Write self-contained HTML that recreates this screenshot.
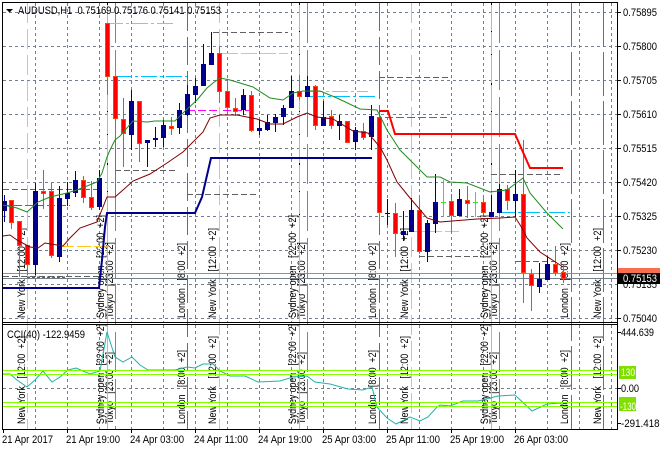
<!DOCTYPE html>
<html><head><meta charset="utf-8"><title>AUDUSD,H1</title>
<style>
html,body{margin:0;padding:0;background:#fff;width:660px;height:450px;overflow:hidden}
svg{display:block}
text{font-family:"Liberation Sans",sans-serif;font-size:11px;fill:#000;white-space:pre}
.v text{font-size:11px}
</style></head><body>
<svg width="660" height="450" viewBox="0 0 660 450" xmlns="http://www.w3.org/2000/svg" xml:space="preserve">
<rect width="660" height="450" fill="#fff"/>
<!-- grid -->
<g stroke="#708090" fill="none" stroke-dasharray="3 3" shape-rendering="crispEdges">
<path d="M3 12.5H617M3 46.5H617M3 80.5H617M3 114.5H617M3 148.5H617M3 182.5H617M3 216.5H617M3 250.5H617M3 284.5H617M3 318.5H617M3 388.5H617"/>
<path d="M35.5 3V322M67.5 3V322M99.5 3V322M131.5 3V322M163.5 3V322M195.5 3V322M227.5 3V322M259.5 3V322M291.5 3V322M323.5 3V322M355.5 3V322M387.5 3V322M419.5 3V322M451.5 3V322M483.5 3V322M515.5 3V322M547.5 3V322M579.5 3V322M611.5 3V322"/>
<path d="M35.5 325V429M67.5 325V429M99.5 325V429M131.5 325V429M163.5 325V429M195.5 325V429M227.5 325V429M259.5 325V429M291.5 325V429M323.5 325V429M355.5 325V429M387.5 325V429M419.5 325V429M451.5 325V429M483.5 325V429M515.5 325V429M547.5 325V429M579.5 325V429M611.5 325V429"/>
</g>
<!-- vertical session labels -->
<g class="v">
<text transform="translate(25,318) rotate(-90)" textLength="90" lengthAdjust="spacingAndGlyphs">New York   [12:00  +2]</text>
<text transform="translate(104,318) rotate(-90)" textLength="103" lengthAdjust="spacingAndGlyphs">Sydney open   [22:00  +2]</text>
<text transform="translate(113,318) rotate(-90)" textLength="76" lengthAdjust="spacingAndGlyphs">Tokyo   [23:00  +2]</text>
<text transform="translate(185,318) rotate(-90)" textLength="75" lengthAdjust="spacingAndGlyphs">London   [8:00  +2]</text>
<text transform="translate(216,318) rotate(-90)" textLength="90" lengthAdjust="spacingAndGlyphs">New York   [12:00  +2]</text>
<text transform="translate(296,318) rotate(-90)" textLength="103" lengthAdjust="spacingAndGlyphs">Sydney open   [22:00  +2]</text>
<text transform="translate(305,318) rotate(-90)" textLength="76" lengthAdjust="spacingAndGlyphs">Tokyo   [23:00  +2]</text>
<text transform="translate(376,318) rotate(-90)" textLength="75" lengthAdjust="spacingAndGlyphs">London   [8:00  +2]</text>
<text transform="translate(408,318) rotate(-90)" textLength="90" lengthAdjust="spacingAndGlyphs">New York   [12:00  +2]</text>
<text transform="translate(488,318) rotate(-90)" textLength="103" lengthAdjust="spacingAndGlyphs">Sydney open   [22:00  +2]</text>
<text transform="translate(497,318) rotate(-90)" textLength="76" lengthAdjust="spacingAndGlyphs">Tokyo   [23:00  +2]</text>
<text transform="translate(568,318) rotate(-90)" textLength="75" lengthAdjust="spacingAndGlyphs">London   [8:00  +2]</text>
<text transform="translate(601,318) rotate(-90)" textLength="90" lengthAdjust="spacingAndGlyphs">New York   [12:00  +2]</text>

<text transform="translate(25,424) rotate(-90)" textLength="88" lengthAdjust="spacingAndGlyphs">New York   [12:00  +2]</text>
<text transform="translate(104,424) rotate(-90)" textLength="100" lengthAdjust="spacingAndGlyphs">Sydney open   [22:00  +2]</text>
<text transform="translate(113,424) rotate(-90)" textLength="72" lengthAdjust="spacingAndGlyphs">Tokyo   [23:00  +2]</text>
<text transform="translate(185,424) rotate(-90)" textLength="74" lengthAdjust="spacingAndGlyphs">London   [8:00  +2]</text>
<text transform="translate(216,424) rotate(-90)" textLength="88" lengthAdjust="spacingAndGlyphs">New York   [12:00  +2]</text>
<text transform="translate(296,424) rotate(-90)" textLength="100" lengthAdjust="spacingAndGlyphs">Sydney open   [22:00  +2]</text>
<text transform="translate(305,424) rotate(-90)" textLength="72" lengthAdjust="spacingAndGlyphs">Tokyo   [23:00  +2]</text>
<text transform="translate(376,424) rotate(-90)" textLength="74" lengthAdjust="spacingAndGlyphs">London   [8:00  +2]</text>
<text transform="translate(408,424) rotate(-90)" textLength="88" lengthAdjust="spacingAndGlyphs">New York   [12:00  +2]</text>
<text transform="translate(488,424) rotate(-90)" textLength="100" lengthAdjust="spacingAndGlyphs">Sydney open   [22:00  +2]</text>
<text transform="translate(497,424) rotate(-90)" textLength="72" lengthAdjust="spacingAndGlyphs">Tokyo   [23:00  +2]</text>
<text transform="translate(568,424) rotate(-90)" textLength="74" lengthAdjust="spacingAndGlyphs">London   [8:00  +2]</text>
<text transform="translate(601,424) rotate(-90)" textLength="88" lengthAdjust="spacingAndGlyphs">New York   [12:00  +2]</text>
</g>
<!-- session vertical lines -->
<g fill="none" stroke-width="1">
<line x1="27.5" y1="3" x2="27.5" y2="429" stroke="#FFC61E" stroke-dasharray="20 6"/>
<line x1="219.5" y1="3" x2="219.5" y2="429" stroke="#FFC61E" stroke-dasharray="20 6"/>
<line x1="411.5" y1="3" x2="411.5" y2="429" stroke="#FFC61E" stroke-dasharray="20 6"/>
<line x1="187.5" y1="3" x2="187.5" y2="429" stroke="#F010E0" stroke-dasharray="28 6"/>
<line x1="379.5" y1="3" x2="379.5" y2="429" stroke="#F010E0" stroke-dasharray="28 6"/>
<line x1="107.5" y1="3" x2="107.5" y2="429" stroke="#D8A0D8"/>
<line x1="299.5" y1="3" x2="299.5" y2="429" stroke="#D8A0D8"/>
<line x1="491.5" y1="3" x2="491.5" y2="429" stroke="#D8A0D8"/>
<line x1="115.5" y1="3" x2="115.5" y2="429" stroke="#1CA8DC" stroke-dasharray="40 7"/>
<line x1="307.5" y1="3" x2="307.5" y2="429" stroke="#1CA8DC" stroke-dasharray="40 7"/>
<line x1="499.5" y1="3" x2="499.5" y2="429" stroke="#1CA8DC" stroke-dasharray="40 7"/>
<line x1="571.5" y1="3" x2="571.5" y2="429" stroke="#707070" stroke-dasharray="44 5"/>
<line x1="603.5" y1="3" x2="603.5" y2="429" stroke="#707070" stroke-dasharray="44 5"/>
</g>
<g fill="none" shape-rendering="crispEdges">
<path d="M107.5 3V322M299.5 3V322M491.5 3V322" stroke="#000" stroke-dasharray="2 26 1 22 1 28"/>
<!-- horizontal objects -->
<path d="M107 23.5H176" stroke="#D8A0D8" stroke-dasharray="16 3 3 3"/>
<path d="M116 76.5H187" stroke="#00BFFF" stroke-width="1" stroke-dasharray="16 3 3 3"/>
<path d="M187 110.5H219M223 110.5H256" stroke="#FF00FF" stroke-dasharray="8 3"/>
<path d="M213 32.5H288" stroke="#606060" stroke-dasharray="6 3"/>
<path d="M222 53.5H288" stroke="#FFC61E" stroke-dasharray="16 3"/>
<path d="M379 77.5H452" stroke="#606060" stroke-dasharray="6 3"/>
<path d="M307 91.5H368" stroke="#D8A0D8" stroke-dasharray="16 3 3 3"/>
<path d="M309 96.5H377" stroke="#00BFFF" stroke-dasharray="16 3 3 3"/>
<path d="M385 117.5H447" stroke="#FF00FF" stroke-dasharray="8 3"/>
<path d="M115 170.5H176M491 174.5H560" stroke="#606060" stroke-dasharray="6 3"/>
<path d="M3 189.5H100M187 194.5H257" stroke="#606060" stroke-dasharray="6 3"/>
<path d="M3 205.5H70" stroke="#FF00FF" stroke-dasharray="8 3"/>
<path d="M499 212.5H570" stroke="#00BFFF" stroke-dasharray="16 3 3 3"/>
<path d="M60 246.5H107M411 231.5H460" stroke="#FFC61E" stroke-dasharray="14 3"/>
<path d="M419 256.5H478M515 261.5H555" stroke="#606060" stroke-dasharray="6 3"/>
<path d="M3 276.5H100" stroke="#606060" stroke-dasharray="6 3"/>
<path d="M27 277.5H66" stroke="#606060" stroke-width="2" stroke-dasharray="3 2"/>
<!-- price lines -->
<path d="M3 273.5H617" stroke="#EE6A50"/>
<path d="M3 278.5H617" stroke="#708090"/>
</g>
<!-- wicks -->
<path fill="none" stroke="#FF4500" shape-rendering="crispEdges" d="M107.5 23V95M115.5 76V195M123.5 98V167M139.5 101V162M171.5 117V135M219.5 46V103M227.5 81V115M235.5 98V116M251.5 91V132M299.5 75V100M315.5 85V130M331.5 110V129M347.5 121V143M363.5 123V140M379.5 117V226M395.5 203V257M419.5 198V254M451.5 194V232M467.5 186V218M483.5 198V215M507.5 185V210M523.5 140V303M531.5 269V311M555.5 246V276M563.5 265V283M11.5 200V229M19.5 221V277M27.5 245V275M43.5 170V209M51.5 183V258M83.5 176V203M91.5 181V210"/>
<path fill="none" stroke="#00008B" shape-rendering="crispEdges" d="M131.5 90V150M147.5 140V167M155.5 127V147M163.5 120V147M179.5 103V134M187.5 85V116M195.5 78V103M203.5 44V86M211.5 32V65M243.5 89V115M259.5 120V135M267.5 115V131M275.5 114V132M283.5 105V125M291.5 76V108M307.5 76V97M323.5 101V126M339.5 115V140M355.5 127V150M371.5 105V150M387.5 199V225M403.5 211V241M411.5 198V232M427.5 220V262M435.5 174V233M459.5 189V216M491.5 195V217M499.5 184V213M515.5 170V217M539.5 263V293M547.5 256V280M4.5 195V222M35.5 183V275M59.5 186V262M67.5 182V206M75.5 171V197M99.5 170V210"/>
<path fill="none" stroke="#32E632" shape-rendering="crispEdges" d="M443.5 180V217M441 202.5H446M475.5 192V217M473 202.5H478"/>
<!-- bodies -->
<path fill="#FF0000" stroke="#FF4500" shape-rendering="crispEdges" d="M105.5 23.5h4v53h-4zM113.5 76.5h4v42h-4zM121.5 119.5h4v14h-4zM137.5 101.5h4v42h-4zM169.5 126.5h4v2h-4zM217.5 53.5h4v38h-4zM225.5 91.5h4v16h-4zM233.5 108.5h4v3h-4zM249.5 95.5h4v35h-4zM297.5 91.5h4v5h-4zM313.5 86.5h4v39h-4zM329.5 116.5h4v9h-4zM345.5 121.5h4v21h-4zM361.5 131.5h4v6h-4zM377.5 117.5h4v95h-4zM393.5 213.5h4v20h-4zM417.5 210.5h4v41h-4zM449.5 201.5h4v14h-4zM465.5 200.5h4v3h-4zM481.5 202.5h4v10h-4zM505.5 189.5h4v11h-4zM521.5 194.5h4v78h-4zM529.5 274.5h4v11h-4zM553.5 264.5h4v8h-4zM561.5 272.5h4v6h-4zM9.5 200.5h4v22h-4zM17.5 221.5h4v24h-4zM25.5 245.5h4v19h-4zM41.5 191.5h4v2h-4zM49.5 191.5h4v64h-4zM81.5 180.5h4v17h-4zM89.5 197.5h4v10h-4z"/>
<path fill="#00008B" stroke="#00008B" shape-rendering="crispEdges" d="M129.5 101.5h4v33h-4zM145.5 140.5h4v2h-4zM153.5 138.5h4v1h-4zM161.5 125.5h4v12h-4zM177.5 110.5h4v17h-4zM185.5 94.5h4v20h-4zM193.5 86.5h4v8h-4zM201.5 64.5h4v21h-4zM209.5 53.5h4v11h-4zM241.5 95.5h4v14h-4zM257.5 128.5h4v2h-4zM265.5 122.5h4v7h-4zM273.5 117.5h4v5h-4zM281.5 108.5h4v8h-4zM289.5 91.5h4v16h-4zM305.5 86.5h4v10h-4zM321.5 117.5h4v8h-4zM337.5 121.5h4v4h-4zM353.5 130.5h4v11h-4zM369.5 116.5h4v20h-4zM385 213.5h5M401.5 231.5h4v3h-4zM409.5 210.5h4v21h-4zM425.5 223.5h4v28h-4zM433.5 202.5h4v21h-4zM457.5 199.5h4v16h-4zM489.5 212.5h4v4h-4zM497.5 189.5h4v23h-4zM513.5 194.5h4v6h-4zM537.5 279.5h4v7h-4zM545.5 264.5h4v15h-4zM2.5 201.5h4v9h-4zM33.5 191.5h4v73h-4zM57.5 198.5h4v58h-4zM65.5 193.5h4v5h-4zM73.5 180.5h4v12h-4zM97.5 178.5h4v28h-4z"/>
<!-- moving averages -->
<polyline fill="none" stroke="#228B22" stroke-width="1" points="3,205 17,208 27,212 38,202 50,197 67,193 77,190 97,182 102,173 107,157 110,150 115,140 120,136 133,121 147,122 155,121 175,121 183,113 197,100 207,88 213,83 220,78 230,80 253,87 270,98 283,100 293,93 303,91 320,91 337,98 360,109 377,110 387,130 400,150 410,160 427,177 440,177 450,182 467,183 490,192 507,190 523,178 530,193 547,213 563,229"/>
<polyline fill="none" stroke="#800000" stroke-width="1" points="3,236 10,235 17,240 30,247 38,248 45,243 63,246 70,238 80,228 97,222 107,197 115,197 123,190 133,181 150,174 167,163 183,152 187,148 203,132 210,118 220,115 237,115 257,119 270,124 283,124 297,117 307,113 317,117 333,119 353,131 368,133 380,147 387,160 397,182 410,198 427,218 440,222 477,219 500,218 515,217 522,228 527,238 540,252 557,263 563,267"/>
<polyline fill="none" stroke="#00008B" stroke-width="2" points="3,288 99,288 102,260 105,227 107,213 195,213 202,197 211,158 372,158"/>
<polyline fill="none" stroke="#FF0000" stroke-width="2" points="379,111 388,111 395,134 515,134 530,168 563,168"/>
<!-- CCI -->
<polyline fill="none" stroke="#20B2AA" stroke-width="1" points="3,374 10,374 17,380 27,387 35,380 43,371 52,382 60,377 68,370 76,368 90,374 100,371 107,332 115,357 123,362 132,357 140,365 148,370 167,370 175,370 187,367 195,368 203,364 213,364 220,371 230,376 245,376 258,382 280,381 293,377 307,376 315,382 330,384 348,389 363,390 372,387 377,407 387,418 396,424 410,417 420,421 428,417 437,407 440,405 450,406 463,401 478,401 498,396 515,395 532,411 547,404 560,403 563,405"/>
<!-- CCI levels -->
<g stroke="#7FFF00" stroke-width="1" fill="none" shape-rendering="crispEdges">
<path d="M3 370.5H617M3 374.5H617M3 402.5H617M3 406.5H617"/>
</g>
<!-- frame -->
<g stroke="#000" fill="none" shape-rendering="crispEdges">
<path d="M2.5 2.5H617.5V429.5H2.5Z"/>
<path d="M2 322.5H618M2 324.5H618"/>
<path d="M618 12.5h3M618 46.5h3M618 80.5h3M618 114.5h3M618 148.5h3M618 182.5h3M618 216.5h3M618 250.5h3M618 318.5h3M618 332.5h3M618 388.5h3M618 423.5h3"/>
<path d="M3.5 430v3M67.5 430v3M131.5 430v3M195.5 430v3M259.5 430v3M323.5 430v3M387.5 430v3M451.5 430v3M515.5 430v3"/>
</g>
<!-- title -->
<path d="M6 9h7l-3.5 3.5z" fill="#000"/>
<text x="18" y="14" textLength="203" lengthAdjust="spacingAndGlyphs">AUDUSD,H1  0.75169 0.75176 0.75141 0.75153</text>
<text x="7" y="338" textLength="78" lengthAdjust="spacingAndGlyphs">CCI(40) -122.9459</text>
<!-- price axis -->
<g>
<text x="623" y="16" textLength="34" lengthAdjust="spacingAndGlyphs">0.75895</text>
<text x="623" y="50" textLength="34" lengthAdjust="spacingAndGlyphs">0.75800</text>
<text x="623" y="84" textLength="34" lengthAdjust="spacingAndGlyphs">0.75705</text>
<text x="623" y="118" textLength="34" lengthAdjust="spacingAndGlyphs">0.75610</text>
<text x="623" y="152" textLength="34" lengthAdjust="spacingAndGlyphs">0.75515</text>
<text x="623" y="186" textLength="34" lengthAdjust="spacingAndGlyphs">0.75420</text>
<text x="623" y="220" textLength="34" lengthAdjust="spacingAndGlyphs">0.75325</text>
<text x="623" y="254" textLength="34" lengthAdjust="spacingAndGlyphs">0.75230</text>
<text x="623" y="322" textLength="34" lengthAdjust="spacingAndGlyphs">0.75040</text>
<text x="623" y="288" textLength="34" lengthAdjust="spacingAndGlyphs">0.75135</text>
</g>
<rect x="618" y="268" width="42" height="6" fill="#FA6E50"/>
<rect x="618" y="273" width="42" height="11" fill="#000"/>
<text x="623" y="282" textLength="34" lengthAdjust="spacingAndGlyphs" style="fill:#fff">0.75153</text>
<text x="621" y="336" textLength="33" lengthAdjust="spacingAndGlyphs">444.639</text>
<rect x="619" y="366" width="17" height="13" fill="#7FE000"/>
<text x="621" y="376" textLength="14" lengthAdjust="spacingAndGlyphs" style="fill:#fff">130</text>
<text x="621" y="392" textLength="18" lengthAdjust="spacingAndGlyphs">0.00</text>
<rect x="619" y="397" width="17" height="14" fill="#7FE000"/>
<text x="620" y="410" textLength="16" lengthAdjust="spacingAndGlyphs" style="fill:#fff">-130</text>
<text x="621" y="427" textLength="44" lengthAdjust="spacingAndGlyphs">-291.4186</text>
<!-- time axis -->
<text x="2" y="443" textLength="51" lengthAdjust="spacingAndGlyphs">21 Apr 2017</text>
<text x="66" y="443" textLength="54" lengthAdjust="spacingAndGlyphs">21 Apr 19:00</text>
<text x="130" y="443" textLength="54" lengthAdjust="spacingAndGlyphs">24 Apr 03:00</text>
<text x="194" y="443" textLength="54" lengthAdjust="spacingAndGlyphs">24 Apr 11:00</text>
<text x="258" y="443" textLength="54" lengthAdjust="spacingAndGlyphs">24 Apr 19:00</text>
<text x="322" y="443" textLength="54" lengthAdjust="spacingAndGlyphs">25 Apr 03:00</text>
<text x="386" y="443" textLength="54" lengthAdjust="spacingAndGlyphs">25 Apr 11:00</text>
<text x="450" y="443" textLength="54" lengthAdjust="spacingAndGlyphs">25 Apr 19:00</text>
<text x="514" y="443" textLength="54" lengthAdjust="spacingAndGlyphs">26 Apr 03:00</text>
</svg>
</body></html>
